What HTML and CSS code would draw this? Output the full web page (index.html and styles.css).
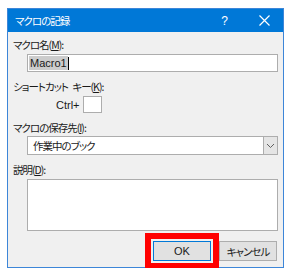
FILE: index.html
```html
<!DOCTYPE html>
<html lang="ja">
<head>
<meta charset="UTF-8">
<title>マクロの記録</title>
<link rel="stylesheet" href="styles.css">
</head>
<body>
<div class="dialog">
    <div class="titlebar">
        <span class="title">マクロの記録</span>
        <span class="help">?</span>
        <svg class="close" width="11" height="11" viewBox="0 0 11 11">
            <path d="M0.5 0.5 L10.5 10.5 M10.5 0.5 L0.5 10.5" stroke="#fff" stroke-width="1.2" fill="none"/>
        </svg>
    </div>
    <div class="content">
        <div class="label">マクロ名(<u>M</u>):</div>
        <div class="field name-field"><span class="selected">Macro1</span><span class="caret"></span></div>

        <div class="label gap">ショートカット キー(<u>K</u>):</div>
        <div class="shortcut">
            <span class="ctrl">Ctrl+</span>
            <span class="keybox"></span>
        </div>

        <div class="label gap">マクロの保存先(<u>I</u>):</div>
        <div class="field select">
            <span class="select-text">作業中のブック</span>
            <span class="arrow">
                <svg width="9" height="6" viewBox="0 0 9 6">
                    <path d="M1 1 L4.5 4.5 L8 1" stroke="#606060" stroke-width="1" fill="none"/>
                </svg>
            </span>
        </div>

        <div class="label gap">説明(<u>D</u>):</div>
        <div class="field memo"></div>

        <div class="buttons">
            <button class="btn btn-default">OK</button>
            <button class="btn">キャンセル</button>
        </div>
    </div>
</div>
</body>
</html>
```

FILE: styles.css
```css
body {
    margin: 0;
    padding: 0;
    background-color: #fff;
    font-family: "Noto Sans CJK JP", "Liberation Sans", sans-serif;
    font-size: 10.5px;
    font-feature-settings: "palt";
    letter-spacing: -1px;
    word-spacing: 3px;
    color: #1a1a1a;
}

.dialog {
    width: 275px;
    height: 258px;
    margin: 8px 0 0 7px;
    border: 1px solid #3d86d8;
    background-color: #f0f0f0;
}

.titlebar {
    height: 23px;
    background-color: #0078d7;
    color: #fff;
    display: flex;
    align-items: center;
    padding-left: 7px;
}

.title {
    flex: 1;
}

.help {
    font-family: "Liberation Sans", sans-serif;
    font-size: 12px;
    letter-spacing: 0;
    margin-right: 31px;
}

.close {
    margin-right: 13px;
}

.content {
    padding: 6px 5px 0 5px;
}

.label {
    height: 14px;
    line-height: 14px;
}

.label u {
    text-decoration: underline;
    text-underline-offset: 1px;
}

.gap {
    margin-top: 8px;
}

.field {
    margin-left: 14px;
    width: 249px;
    border: 1px solid #adadad;
    background-color: #fff;
}

.name-field {
    margin-top: 2px;
    height: 16px;
    display: flex;
    align-items: center;
    padding-left: 1px;
    width: 248px;
    font-family: "Liberation Sans", sans-serif;
    font-size: 11px;
    letter-spacing: 0;
}

.selected {
    background-color: #cccccc;
    padding: 0 1px;
    line-height: 14px;
}

.caret {
    width: 1px;
    height: 13px;
    background-color: #000;
}

.shortcut {
    margin-top: 2px;
    display: flex;
    align-items: center;
    height: 17px;
    padding-left: 43px;
}

.ctrl {
    font-family: "Liberation Sans", sans-serif;
    font-size: 11px;
    letter-spacing: 0;
    margin-right: 3px;
}

.keybox {
    width: 17px;
    height: 15px;
    border: 1px solid #adadad;
    background-color: #fff;
}

.select {
    margin-top: 1px;
    height: 17px;
    display: flex;
    align-items: center;
}

.select-text {
    flex: 1;
    padding-left: 5px;
}

.arrow {
    width: 13px;
    height: 17px;
    background-color: #e5e5e5;
    border-left: 1px solid #adadad;
    display: flex;
    align-items: center;
    justify-content: center;
}

.memo {
    margin-top: 2px;
    height: 50px;
}

.buttons {
    margin-top: 10px;
    display: flex;
    justify-content: flex-end;
    gap: 8px;
    padding-right: 1px;
}

.btn {
    width: 58px;
    height: 20px;
    padding: 0;
    border: 1px solid #adadad;
    background-color: #e1e1e1;
    font-family: "Noto Sans CJK JP", "Liberation Sans", sans-serif;
    font-size: 10.5px;
    font-feature-settings: "palt";
    letter-spacing: -1px;
    color: #1a1a1a;
}

.btn-default {
    border-color: #0078d7;
    outline: 6px solid #ff0000;
    outline-offset: 2px;
    font-family: "Liberation Sans", sans-serif;
    font-size: 11px;
    letter-spacing: 0;
}
```
